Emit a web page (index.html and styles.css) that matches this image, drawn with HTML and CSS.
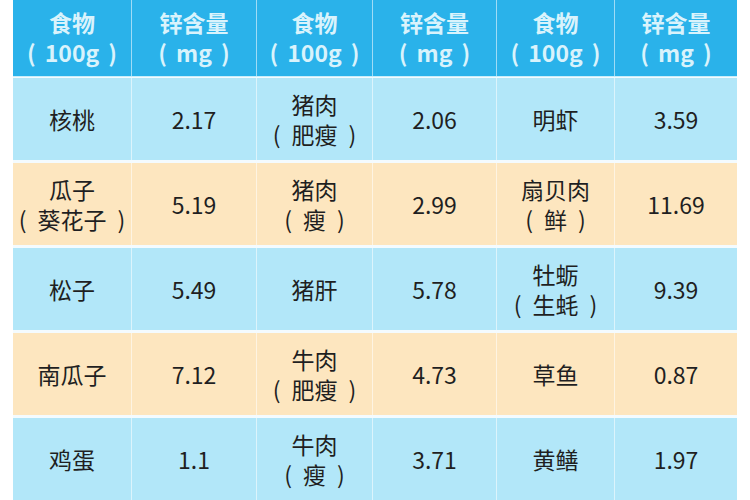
FILE: index.html
```html
<!DOCTYPE html>
<html lang="zh">
<head>
<meta charset="utf-8">
<link rel="stylesheet" href="styles.css">
</head>
<body>
<div class="table">
  <div class="row head">
    <div class="cell"><div>食物<br><span class="pl">(</span>100g<span class="pr">)</span></div></div><div class="cell"><div>锌含量<br><span class="pl">(</span>mg<span class="pr">)</span></div></div>
    <div class="cell"><div>食物<br><span class="pl">(</span>100g<span class="pr">)</span></div></div><div class="cell"><div>锌含量<br><span class="pl">(</span>mg<span class="pr">)</span></div></div>
    <div class="cell"><div>食物<br><span class="pl">(</span>100g<span class="pr">)</span></div></div><div class="cell"><div>锌含量<br><span class="pl">(</span>mg<span class="pr">)</span></div></div>
  </div>
  <div class="row blue">
    <div class="cell"><div>核桃</div></div><div class="cell"><div>2.17</div></div>
    <div class="cell"><div>猪肉<br><span class="pl">(</span>肥瘦<span class="pr">)</span></div></div><div class="cell"><div>2.06</div></div>
    <div class="cell"><div>明虾</div></div><div class="cell"><div>3.59</div></div>
  </div>
  <div class="row orange">
    <div class="cell"><div>瓜子<br><span class="pl">(</span>葵花子<span class="pr">)</span></div></div><div class="cell"><div>5.19</div></div>
    <div class="cell"><div>猪肉<br><span class="pl">(</span>瘦<span class="pr">)</span></div></div><div class="cell"><div>2.99</div></div>
    <div class="cell"><div>扇贝肉<br><span class="pl">(</span>鲜<span class="pr">)</span></div></div><div class="cell"><div>11.69</div></div>
  </div>
  <div class="row blue">
    <div class="cell"><div>松子</div></div><div class="cell"><div>5.49</div></div>
    <div class="cell"><div>猪肝</div></div><div class="cell"><div>5.78</div></div>
    <div class="cell"><div>牡蛎<br><span class="pl">(</span>生蚝<span class="pr">)</span></div></div><div class="cell"><div>9.39</div></div>
  </div>
  <div class="row orange">
    <div class="cell"><div>南瓜子</div></div><div class="cell"><div>7.12</div></div>
    <div class="cell"><div>牛肉<br><span class="pl">(</span>肥瘦<span class="pr">)</span></div></div><div class="cell"><div>4.73</div></div>
    <div class="cell"><div>草鱼</div></div><div class="cell"><div>0.87</div></div>
  </div>
  <div class="row blue">
    <div class="cell"><div>鸡蛋</div></div><div class="cell"><div>1.1</div></div>
    <div class="cell"><div>牛肉<br><span class="pl">(</span>瘦<span class="pr">)</span></div></div><div class="cell"><div>3.71</div></div>
    <div class="cell"><div>黄鳝</div></div><div class="cell"><div>1.97</div></div>
  </div>
</div>
</body>
</html>
```
FILE: styles.css
```css
html, body {
  margin: 0;
  padding: 0;
  background: #ffffff;
}
body {
  font-family: "Noto Sans CJK SC", "Noto Sans", sans-serif;
  width: 750px;
  height: 500px;
  overflow: hidden;
}
.table {
  margin-left: 13px;
  width: 724px;
  display: flex;
  flex-direction: column;
  gap: 3px;
  background: #f4fbfe;
}
.row {
  display: grid;
  grid-template-columns: 119px 125px 116px 124px 118px 122px;
  height: 82px;
}
.row.head {
  height: 76px;
  margin-bottom: -2px;
  border-bottom: 1px solid #c8eefb;
}
.cell {
  display: flex;
  align-items: center;
  justify-content: center;
  text-align: center;
  font-size: 23px;
  line-height: 30px;
  color: #1f1f22;
  border-right: 1px solid rgba(255, 255, 255, 0.55);
}
.cell:last-child {
  border-right: none;
}
.pl {
  margin-right: 11px;
}
.pr {
  margin-left: 11px;
}
.head .pl {
  margin-right: 9px;
}
.head .pr {
  margin-left: 9px;
}
.head .cell {
  background: #2ab2ea;
  color: #d9f3fc;
  font-weight: bold;
  padding-bottom: 2px;
}
.blue .cell {
  background: #b2e7f9;
}
.orange .cell {
  background: #fde6bf;
}
```
